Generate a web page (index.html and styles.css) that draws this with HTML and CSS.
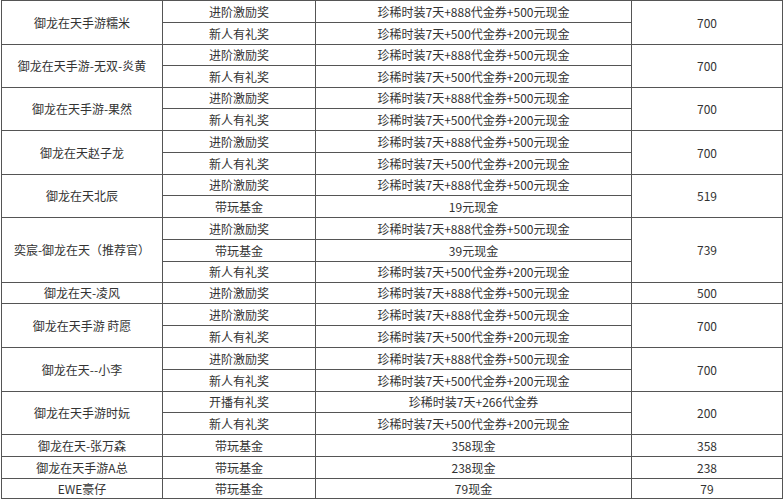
FILE: index.html
```html
<!DOCTYPE html>
<html lang="zh-CN">
<head>
<meta charset="utf-8">
<title>御龙在天 奖励表</title>
<link rel="stylesheet" href="styles.css">
</head>
<body>
<div class="grid">
  <div class="c name s2">御龙在天手游糯米</div>
  <div class="c">进阶激励奖</div>
  <div class="c">珍稀时装7天+888代金券+500元现金</div>
  <div class="c num s2">700</div>
  <div class="c">新人有礼奖</div>
  <div class="c">珍稀时装7天+500代金券+200元现金</div>

  <div class="c name s2">御龙在天手游-无双-炎黄</div>
  <div class="c">进阶激励奖</div>
  <div class="c">珍稀时装7天+888代金券+500元现金</div>
  <div class="c num s2">700</div>
  <div class="c">新人有礼奖</div>
  <div class="c">珍稀时装7天+500代金券+200元现金</div>

  <div class="c name s2">御龙在天手游-果然</div>
  <div class="c">进阶激励奖</div>
  <div class="c">珍稀时装7天+888代金券+500元现金</div>
  <div class="c num s2">700</div>
  <div class="c">新人有礼奖</div>
  <div class="c">珍稀时装7天+500代金券+200元现金</div>

  <div class="c name s2">御龙在天赵子龙</div>
  <div class="c">进阶激励奖</div>
  <div class="c">珍稀时装7天+888代金券+500元现金</div>
  <div class="c num s2">700</div>
  <div class="c">新人有礼奖</div>
  <div class="c">珍稀时装7天+500代金券+200元现金</div>

  <div class="c name s2">御龙在天北辰</div>
  <div class="c">进阶激励奖</div>
  <div class="c">珍稀时装7天+888代金券+500元现金</div>
  <div class="c num s2">519</div>
  <div class="c">带玩基金</div>
  <div class="c">19元现金</div>

  <div class="c name s3">奕宸-御龙在天（推荐官）</div>
  <div class="c">进阶激励奖</div>
  <div class="c">珍稀时装7天+888代金券+500元现金</div>
  <div class="c num s3">739</div>
  <div class="c">带玩基金</div>
  <div class="c">39元现金</div>
  <div class="c">新人有礼奖</div>
  <div class="c">珍稀时装7天+500代金券+200元现金</div>

  <div class="c name">御龙在天-凌风</div>
  <div class="c">进阶激励奖</div>
  <div class="c">珍稀时装7天+888代金券+500元现金</div>
  <div class="c num">500</div>

  <div class="c name s2">御龙在天手游 莳愿</div>
  <div class="c">进阶激励奖</div>
  <div class="c">珍稀时装7天+888代金券+500元现金</div>
  <div class="c num s2">700</div>
  <div class="c">新人有礼奖</div>
  <div class="c">珍稀时装7天+500代金券+200元现金</div>

  <div class="c name s2">御龙在天--小李</div>
  <div class="c">进阶激励奖</div>
  <div class="c">珍稀时装7天+888代金券+500元现金</div>
  <div class="c num s2">700</div>
  <div class="c">新人有礼奖</div>
  <div class="c">珍稀时装7天+500代金券+200元现金</div>

  <div class="c name s2">御龙在天手游时妧</div>
  <div class="c">开播有礼奖</div>
  <div class="c">珍稀时装7天+266代金券</div>
  <div class="c num s2">200</div>
  <div class="c">新人有礼奖</div>
  <div class="c">珍稀时装7天+500代金券+200元现金</div>

  <div class="c name">御龙在天-张万森</div>
  <div class="c">带玩基金</div>
  <div class="c">358现金</div>
  <div class="c num">358</div>

  <div class="c name">御龙在天手游A总</div>
  <div class="c">带玩基金</div>
  <div class="c">238现金</div>
  <div class="c num">238</div>

  <div class="c name">EWE豪仔</div>
  <div class="c">带玩基金</div>
  <div class="c">79现金</div>
  <div class="c num">79</div>
</div>
</body>
</html>
```

FILE: styles.css
```css
html, body {
  margin: 0;
  padding: 0;
  background: #ffffff;
}

body {
  font-family: "Noto Sans CJK SC", "Noto Sans", sans-serif;
  font-size: 12px;
  color: #333333;
}

.grid {
  display: grid;
  margin-left: 1px;
  width: max-content;
  grid-template-columns: 161px 153px 316px 151px;
  grid-template-rows: 22px 22px 21px 22px 21px 22px 22px 22px 21px 22px 22px 22px 21px 21px 22px 22px 22px 22px 21px 22px 22px 22px 20px;
  border-top: 1px solid #555555;
  border-left: 1px solid #555555;
}

.c {
  display: flex;
  align-items: center;
  justify-content: center;
  border-right: 1px solid #555555;
  border-bottom: 1px solid #555555;
  line-height: 1;
  white-space: nowrap;
  overflow: hidden;
}

.s2 {
  grid-row: span 2;
}

.s3 {
  grid-row: span 3;
}
```
